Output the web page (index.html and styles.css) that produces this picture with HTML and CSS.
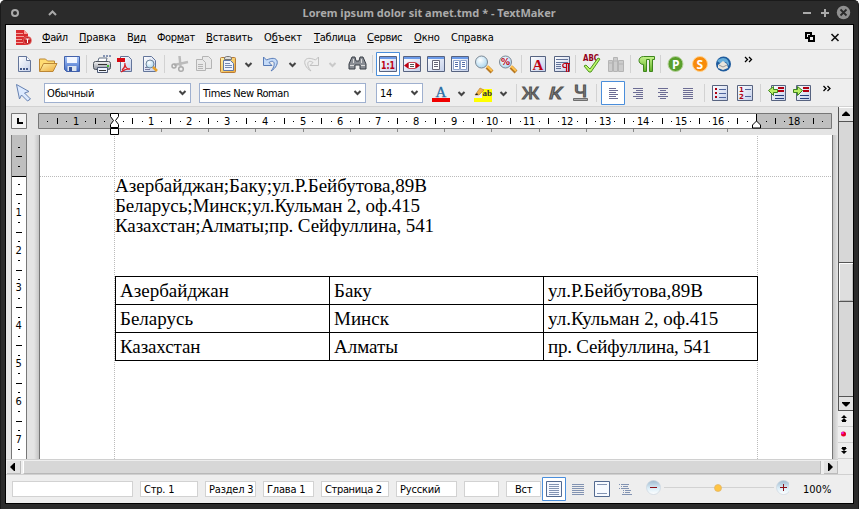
FILE: index.html
```
<!DOCTYPE html>
<html lang="ru">
<head>
<meta charset="utf-8">
<title>TextMaker</title>
<link rel="stylesheet" href="styles.css">
</head>
<body>
<svg class="defs" width="0" height="0">
  <defs>
    <linearGradient id="paper" x1="0" y1="0" x2="1" y2="1"><stop offset="0" stop-color="#fff"/><stop offset="1" stop-color="#c3cfea"/></linearGradient>
    <linearGradient id="blue" x1="0" y1="0" x2="0" y2="1"><stop offset="0" stop-color="#a9c8fa"/><stop offset="1" stop-color="#3e68c4"/></linearGradient>
    <linearGradient id="gold" x1="0" y1="0" x2="1" y2="1"><stop offset="0" stop-color="#fff3a8"/><stop offset="1" stop-color="#eda93a"/></linearGradient>
    <linearGradient id="steel" x1="0" y1="0" x2="0" y2="1"><stop offset="0" stop-color="#f5f5f5"/><stop offset="1" stop-color="#8d929c"/></linearGradient>
    <linearGradient id="green" x1="0" y1="0" x2="0" y2="1"><stop offset="0" stop-color="#c5f48b"/><stop offset="1" stop-color="#5fae24"/></linearGradient>
    <radialGradient id="glass" cx=".4" cy=".35" r=".7"><stop offset="0" stop-color="#fff"/><stop offset="1" stop-color="#a6d4ef"/></radialGradient>
    <linearGradient id="knob" x1="0" y1="0" x2="0" y2="1"><stop offset="0" stop-color="#9db8cd"/><stop offset=".55" stop-color="#dceef8"/><stop offset="1" stop-color="#fff"/></linearGradient>
  </defs>
</svg>
<div class="window">
  <header class="titlebar">
    <svg class="title-left" width="80" height="24" viewBox="0 0 80 24"><circle cx="15" cy="13" r="3" fill="none" stroke="#aaa" stroke-width="2"/><path d="M49 15l3.500-3.500L56 15" fill="none" stroke="#aaa" stroke-width="2"/></svg>
    <h1 class="title">Lorem ipsum dolor sit amet.tmd * - TextMaker</h1>
    <svg class="title-right" width="80" height="24" viewBox="779 0 80 24"><path d="M803 13h8M821 13h8M825 9v8" stroke="#aaa" stroke-width="2"/><circle cx="843.500" cy="12.500" r="6.700" fill="#909090"/><path d="M840.500 9.500l6 6m0-6l-6 6" stroke="#2b2b2b" stroke-width="1.800"/></svg>
  </header>
  <div class="client">
    <nav class="menubar">
      <svg width="36" height="24" viewBox="6 25 36 24"><path d="M16 30h8l4 4v11H16z" fill="#d82c30"/><path d="M16 33.500h7M16 36.500h8M16 39.500h6M16 42.500h7" stroke="#f4a09b"/><path d="M24 30v4h4" fill="#f9a29c"/><circle cx="27.500" cy="40.500" r="4" fill="#c42125" stroke="#f28b85" stroke-width=".6"/><path d="M25.500 39h4M27.500 39v4" stroke="#fff"/></svg>
      <span class="menu m1"><u>Ф</u>айл</span><span class="menu m2"><u>П</u>равка</span><span class="menu m3">В<u>и</u>д</span><span class="menu m4">Фор<u>м</u>ат</span><span class="menu m5"><u>В</u>ставить</span><span class="menu m6">О<u>б</u>ъект</span><span class="menu m7"><u>Т</u>аблица</span><span class="menu m8"><u>С</u>ервис</span><span class="menu m9"><u>О</u>кно</span><span class="menu m10">Сп<u>р</u>авка</span>
      <svg class="push" width="54" height="24" viewBox="799 25 54 24"><path d="M806 33h5v5h-5z" fill="#eee" stroke="#000" stroke-width="2"/><path d="M809 36h5v5h-5z" fill="#eee" stroke="#000" stroke-width="2"/><path d="M831.500 34l7 7m0-7l-7 7" stroke="#111" stroke-width="1.600"/></svg>
    </nav>

    <div class="toolbar standard">
      <svg width="30" height="28" viewBox="6 50 30 28"><path d="M18.500 56.500h8l4 4v11h-12z" fill="url(#paper)" stroke="#63759a"/><path d="M26.500 56.500v4h4" fill="#fff" stroke="#63759a"/><path d="M20 69h2m1 0h2m1 0h2" stroke="#43598b" stroke-width="2"/></svg>
      <svg width="26" height="28" viewBox="36 50 26 28"><path d="M39.500 71V59h6l2 2h7v3" fill="#ffdc72" stroke="#bc8735"/><path d="M39.500 71.500l4-8h13.500l-4 8z" fill="url(#gold)" stroke="#bc8735"/></svg>
      <svg width="22" height="28" viewBox="62 50 22 28"><path d="M64.500 56.500h15v15h-13l-2-2z" fill="url(#blue)" stroke="#4261aa"/><path d="M67 57h10v6H67z" fill="#f2f6ff"/><path d="M67.500 66h9v5h-9z" fill="#dce4ef"/><path d="M69 67h3v4h-3z" fill="#34539a"/></svg>
      <i class="sep"></i>
      <svg width="27" height="28" viewBox="88 50 27 28"><path d="M98 61l1-3h8l-1 4" fill="#fff" stroke="#657287"/><rect x="93.500" y="61.500" width="17" height="8" rx="2" fill="url(#steel)" stroke="#4b525b"/><path d="M97.500 67.500h10v5h-10z" fill="#eef4ff" stroke="#4c5872"/><path d="M98 64.500h9M99 70.500h7" stroke="#333"/><path d="M103 56h2m1 0h2m1 0h2" stroke="#6478a1" stroke-width="1.500"/><path d="M107 66h2" stroke="#44bb35" stroke-width="2"/></svg>
      <svg width="24" height="28" viewBox="115 50 24 28"><path d="M120.500 56.500h8l3 3v12h-11z" fill="url(#paper)" stroke="#63759a"/><path d="M117 58h8v4h-8z" fill="#d60812"/><path d="M122 70c5-4 2-9 3-5 1 4 3 4 5 4-3-1-6 1-9 3" fill="none" stroke="#d92129" stroke-width="1.300"/></svg>
      <svg width="24" height="28" viewBox="139 50 24 28"><path d="M143.500 56.500h8l4 4v11h-12z" fill="url(#paper)" stroke="#63759a"/><path d="M145 67.500h4m-4 2h5" stroke="#777ba0"/><circle cx="150" cy="64" r="4" fill="url(#glass)" stroke="#71869b"/><path d="M153 67l4 4" stroke="#e8a22b" stroke-width="2.500"/></svg>
      <i class="sep sep-shift"></i>
      <svg width="25" height="28" viewBox="167 50 25 28"><path d="M179.500 56l1 10M188 62l-14 3" stroke="#bbb" stroke-width="2.500"/><circle cx="174" cy="66" r="2" fill="none" stroke="#aaa" stroke-width="1.500"/><circle cx="181" cy="69" r="2.300" fill="none" stroke="#aaa" stroke-width="1.500"/></svg>
      <svg width="24" height="28" viewBox="192 50 24 28" fill="#e9e9e9" stroke="#b4b4b4"><path d="M202.500 56.500h6l3 3v9h-9z"/><path d="M196.500 59.500h6l3 3v8h-9z"/><path d="M198 64.500h5m-5 2h5m-5 2h5"/></svg>
      <svg width="24" height="28" viewBox="216 50 24 28"><rect x="220.500" y="57.500" width="15" height="15" rx="1" fill="url(#gold)" stroke="#b77b38"/><path d="M224.500 59.500v-2l2-1h3l2 1v2z" fill="#ddd" stroke="#777"/><path d="M223.500 60.500h7l3 3v7h-10z" fill="#eff4ff" stroke="#6077a4"/><path d="M225 63.500h5m-5 2h7m-7 2h7" stroke="#778bb1"/></svg>
      <svg width="18" height="28" viewBox="240 50 18 28"><path d="M245.500 63l3 3 3-3" class="chev"/></svg>
      <svg width="26" height="28" viewBox="258 50 26 28"><path d="M263.500 57v8.500h8.500l-3-3c6-4 7 3 2 8.500 9-5 9-17-4.500-11z" fill="#c5dbf8" stroke="#587bb7"/></svg>
      <svg width="16" height="28" viewBox="284 50 16 28"><path d="M289.500 63l3 3 3-3" class="chev"/></svg>
      <svg width="26" height="28" viewBox="300 50 26 28"><path d="M318.500 57v8.500h-8.500l3-3c-6-4-7 3-2 8.500-9-5-9-17 4.500-11z" fill="#eee" stroke="#c1c1c1"/></svg>
      <svg width="18" height="28" viewBox="326 50 18 28"><path d="M329.500 63l3 3 3-3" class="chev off"/></svg>
      <svg width="28" height="28" viewBox="344 50 28 28"><path d="M352 57h3l1 4h3l1-4h3l3 7v5h-6v-4h-5v4h-6v-5z" fill="#898d94" stroke="#393e46"/><path d="M350 65.500h4m7 0h4M353.500 59v4m8-4v4" stroke="#ddd"/></svg>
      <i class="sep sep-tight"></i>
      <svg width="26" height="28" viewBox="375 50 26 28"><path d="M376.500 52.500h23v23h-23z" fill="#fff" stroke="#4a8edb"/><path d="M379.500 56.500h17v15h-17z" fill="url(#paper)" stroke="#576380"/><path d="M380 58h16" stroke="#6c9be9" stroke-width="2"/><text x="381" y="69" class="ratio" textLength="14" lengthAdjust="spacingAndGlyphs">1:1</text></svg>
      <svg width="24" height="28" viewBox="401 50 24 28"><path d="M403.500 56.500h17v15h-17z" fill="url(#paper)" stroke="#576380"/><path d="M404 58h16" stroke="#6c9be9" stroke-width="2"/><path d="M404 65.500l4-3v6zM420 65.500l-4-3v6z" fill="#c00012"/><path d="M408.500 62.500h7v6h-7z" fill="#fff" stroke="#c54b57"/><path d="M410 64.500h4m-4 2h4" stroke="#555"/></svg>
      <svg width="24" height="28" viewBox="425 50 24 28"><path d="M427.500 56.500h17v15h-17z" fill="url(#paper)" stroke="#576380"/><path d="M428 58h16" stroke="#6c9be9" stroke-width="2"/><path d="M432.500 60.500h7v9h-7z" fill="#fff" stroke="#667"/><path d="M434 62.500h4m-4 2h4m-4 2h4" stroke="#667"/></svg>
      <svg width="24" height="28" viewBox="449 50 24 28"><path d="M451.500 56.500h17v15h-17z" fill="url(#paper)" stroke="#576380"/><path d="M452 58h16" stroke="#6c9be9" stroke-width="2"/><path d="M453.500 60.500h6v9h-6zm7 0h6v9h-6z" fill="#fff" stroke="#8fa4cc"/><path d="M455 62.500h3m-3 2h3m-3 2h3m4-4h3m-3 2h3m-3 2h3" stroke="#556ea8"/></svg>
      <svg width="24" height="28" viewBox="473 50 24 28"><path d="M487 67l5 5" stroke="#b77823" stroke-width="4"/><path d="M487 66l5 5" stroke="#ffc350" stroke-width="2"/><circle cx="481.500" cy="62" r="6" fill="url(#glass)" stroke="#7b8794"/></svg>
      <svg width="24" height="28" viewBox="497 50 24 28"><path d="M511 67l5 5" stroke="#b77823" stroke-width="4"/><path d="M511 66l5 5" stroke="#ffc350" stroke-width="2"/><circle cx="505.500" cy="62" r="6" fill="url(#glass)" stroke="#7b8794"/><text x="501" y="65" class="percent">%</text></svg>
      <i class="sep sep-tight"></i>
      <svg width="26" height="28" viewBox="524 50 26 28"><path d="M530.500 56.500h15v15h-15z" fill="url(#paper)" stroke="#566381" /><text x="532.500" y="70" class="char-a">A</text></svg>
      <svg width="25" height="28" viewBox="550 50 25 28"><path d="M554.500 56.500h15v15h-15z" fill="url(#paper)" stroke="#566381"/><path d="M556 59.500h12m-12 3h12m-12 2h5m-5 2h5m-5 2h5" stroke="#627399"/><path d="M570 63.500h-5c-3 0-3 4 0 4h1M566.500 63v9m2-9v9" fill="none" stroke="#c00012" stroke-width="1.200"/></svg>
      <i class="sep sep-tight"></i>
      <svg width="26" height="28" viewBox="578 50 26 28"><text x="583" y="61" class="abc" textLength="16" lengthAdjust="spacingAndGlyphs">ABC</text><path d="M584 66l2-1 4 4 8-11 2 1-9 13h-2z" fill="#bcf56b" stroke="#4d951f"/></svg>
      <svg width="26" height="28" viewBox="604 50 26 28"><path d="M608.500 60.500h4v11h-4zm5-3h4v14h-4zm5 3h5v11h-5zM609 63h3m2-2h3m2 3h4" fill="#ccc" stroke="#b4b4b4"/></svg>
      <i class="sep sep-tight"></i>
      <svg width="27" height="28" viewBox="633 50 27 28"><path d="M654.500 56.500v3h-2v12h-3v-12h-3v12h-3v-7c-6 0-6-8 0-8z" fill="url(#green)" stroke="#3f861d"/></svg>
      <i class="sep sep-tight"></i>
      <svg width="26" height="28" viewBox="663 50 26 28"><circle cx="675.500" cy="64" r="7.500" fill="#5a9f2b" stroke="#b8d39f"/><text x="672" y="68.500" class="round-letter">P</text></svg>
      <svg width="24" height="28" viewBox="689 50 24 28"><circle cx="700" cy="64" r="7.500" fill="#f88b0a" stroke="#ffd290"/><text x="696.500" y="68.500" class="round-letter">S</text></svg>
      <svg width="25" height="28" viewBox="713 50 25 28"><circle cx="723.500" cy="64" r="7.500" fill="#1e5b9d"/><path d="M717 61c6-6 13-2 12 5l-3-4-6 1z" fill="#65acd9"/><path d="M718 65l5-4 4 3 1 4-5 2-5-2z" fill="#e8e5dc"/><path d="M719 65l4 2 4-2" fill="none" stroke="#999"/></svg>
      <svg width="24" height="28" viewBox="738 50 24 28"><path class="more" d="M745 57l2.500 2.500-2.500 2.500m4-5l2.500 2.500-2.500 2.500"/></svg>
    </div>

    <div class="toolbar format">
      <svg width="38" height="27" viewBox="6 79 38 27"><path d="M16.500 84.500l12.500 7-4.500 1.500 6 6-3 2-6-6-2 4z" fill="#dceaff" stroke="#6580b0"/></svg>
      <div class="combo style"><span>Обычный</span><svg width="9" height="6" viewBox="0 0 9 6"><path class="chev" d="M1.500 1l3 3 3-3"/></svg></div>
      <div class="combo family"><span>Times New Roman</span><svg width="9" height="6" viewBox="0 0 9 6"><path class="chev" d="M1.500 1l3 3 3-3"/></svg></div>
      <div class="combo size"><span>14</span><svg width="9" height="6" viewBox="0 0 9 6"><path class="chev" d="M1.500 1l3 3 3-3"/></svg></div>
      <svg width="31" height="27" viewBox="423 79 31 27"><text x="435.500" y="97" class="color-a">A</text><path d="M432 98h18v4h-18z" fill="#f00000"/></svg>
      <svg width="17" height="27" viewBox="454 79 17 27"><path d="M458.500 92l3 3 3-3" class="chev"/></svg>
      <svg width="25" height="27" viewBox="471 79 25 27"><path d="M474 98h18v4h-18zm8-9h10v9h-10z" fill="#ff0"/><path d="M475 95l5-7 4 2-5 5z" fill="#f5b545" stroke="#b17a32" stroke-width=".6"/><path d="M475 95l2-2 1 2z" fill="#222"/><text x="482.500" y="96" class="ab">ab</text></svg>
      <svg width="18" height="27" viewBox="496 79 18 27"><path d="M500.500 92l3 3 3-3" class="chev"/></svg>
      <i class="sep"></i>
      <svg width="28" height="27" viewBox="518 79 28 27"><text x="522" y="99" class="face" textLength="17" lengthAdjust="spacingAndGlyphs">Ж</text></svg>
      <svg width="25" height="27" viewBox="546 79 25 27"><text x="549" y="99" class="face italic" textLength="13" lengthAdjust="spacingAndGlyphs">К</text></svg>
      <svg width="25" height="27" viewBox="571 79 25 27"><text x="574" y="97" class="face" textLength="13" lengthAdjust="spacingAndGlyphs">Ч</text><path d="M573.500 98.500h14v2h-14z" fill="#aaa" stroke="#555" stroke-width=".8"/></svg>
      <i class="sep sep-tight"></i>
      <svg width="29" height="27" viewBox="599 79 29 27"><path d="M601.500 81.500h23v23h-23z" fill="#fff" stroke="#4a8edb"/><path class="align" d="M609 88.500h7m-7 2h9m-9 2h7m-7 2h9m-9 2h7m-7 2h9"/></svg>
      <svg width="25" height="27" viewBox="628 79 25 27"><path class="align" d="M633 88.500h10m-7 2h7m-10 2h10m-7 2h7m-10 2h10m-7 2h7"/></svg>
      <svg width="25" height="27" viewBox="653 79 25 27"><path class="align" d="M658 88.500h10m-8 2h6m-8 2h10m-8 2h6m-8 2h10m-8 2h6"/></svg>
      <svg width="26" height="27" viewBox="678 79 26 27"><path class="align" d="M683 88.500h10m-10 2h10m-10 2h10m-10 2h10m-10 2h10m-10 2h10"/></svg>
      <i class="sep sep-tight"></i>
      <svg width="26" height="27" viewBox="707 79 26 27"><path d="M712.500 85.500h15v15h-15z" fill="url(#paper)" stroke="#576380"/><path d="M715 88h2v2h-2zm0 4h2v2h-2zm0 4h2v2h-2z" fill="#b00012"/><path d="M719 89.500h7m-7 4h7m-7 4h7" stroke="#4f659d"/></svg>
      <svg width="27" height="27" viewBox="733 79 27 27"><path d="M737.500 85.500h15v15h-15z" fill="url(#paper)" stroke="#576380"/><text x="739" y="92" class="list-number">1</text><text x="739" y="99" class="list-number">2</text><path d="M745 89.500h6m-6 7h6" stroke="#4f659d"/></svg>
      <i class="sep sep-tight"></i>
      <svg width="26" height="27" viewBox="763 79 26 27"><path d="M771.500 85.500h14v15h-14z" fill="url(#paper)" stroke="#576380"/><path d="M778 88h6m-6 3h6" stroke="#b00012" stroke-width="2"/><path d="M775 95.500h9m-9 3h9" stroke="#27407d"/><path d="M768.500 90.500l5-4v3h4v3h-4v3z" fill="#b9ef67" stroke="#3d851d"/></svg>
      <svg width="27" height="27" viewBox="789 79 27 27"><path d="M796.500 85.500h14v15h-14z" fill="url(#paper)" stroke="#576380"/><path d="M803 88h6m-6 3h6" stroke="#b00012" stroke-width="2"/><path d="M800 95.500h9m-9 3h9" stroke="#27407d"/><path d="M802.500 90.500l-5-4v3h-4v3h4v3z" fill="#b9ef67" stroke="#3d851d"/></svg>
      <svg width="24" height="27" viewBox="816 79 24 27"><path class="more" d="M823.500 86l2.500 2.500-2.500 2.500m4-5l2.500 2.500-2.500 2.500"/></svg>
    </div>

    <main class="workspace">
      <div class="editor">
        <svg id="hruler" width="832" height="28" viewBox="6 107 832 28">
          <path d="M11.500 113.500h15v15h-15z" fill="#f2f2f2" stroke="#777"/><path d="M17 118h2v4h4v2h-6z"/>
          <path d="M38.500 113.500h793v15h-793z" fill="#fff" stroke="#777"/><path d="M39 114h75v14H39zM757 114h74v14h-74z" fill="#bfbfbf"/>
        </svg>
        <div class="page-row">
          <svg id="vruler" width="28" height="324" viewBox="6 135 28 324"><path d="M12 134h14v326H12z" fill="#fff"/><path d="M12 134h14v42H12z" fill="#bfbfbf"/><path d="M11.500 134v326m15 0V134" stroke="#777"/><path d="M12 176.500h14" stroke="#000"/></svg>
          <article class="page">
            <div class="body">
              <p>Азербайджан;Баку;ул.Р.Бейбутова,89В</p>
              <p class="snug">Беларусь;Минск;ул.Кульман 2, оф.415</p>
              <p class="snug">Казахстан;Алматы;пр. Сейфуллина, 541</p>
              <table>
                <tr><td>Азербайджан</td><td>Баку</td><td>ул.Р.Бейбутова,89В</td></tr>
                <tr><td>Беларусь</td><td>Минск</td><td>ул.Кульман 2, оф.415</td></tr>
                <tr><td class="snug">Казахстан</td><td>Алматы</td><td class="snugger">пр. Сейфуллина, 541</td></tr>
              </table>
            </div>
          </article>
          <div class="page-shade"></div>
        </div>
        <div class="hscroll"><button class="arrow"><svg width="14" height="13" viewBox="0 0 14 13"><path d="M8 2v8h-1L3 6l4-4z"/></svg></button><div class="hthumb"></div><button class="arrow"><svg width="14" height="13" viewBox="0 0 14 13"><path d="M4 2v8h1l4-4-4-4z"/></svg></button></div>
      </div>
      <aside class="vscroll">
        <button class="vbtn up"><svg width="14" height="13" viewBox="0 0 14 13"><path d="M3 8h8V7L7.500 3.500h-1L3 7z"/></svg></button>
        <div class="track"><div class="vthumb"></div></div>
        <button class="vbtn down"><svg width="14" height="13" viewBox="0 0 14 13"><path d="M3 5h8v1L7.500 9.500h-1L3 6z"/></svg></button>
        <div class="jump"><svg width="14" height="15" viewBox="0 0 14 15"><path d="M3 7h6L6 4zm0 3h6L6 7zM4 10h4v1H4z"/></svg></div>
        <div class="jump"><svg width="14" height="15" viewBox="0 0 14 15"><circle cx="5.500" cy="7" r="2.500" fill="#e90028"/><circle cx="4.500" cy="6" r="1.300" fill="#f020dc"/></svg></div>
        <div class="jump"><svg width="14" height="15" viewBox="0 0 14 15"><path d="M4 4h4v1H4zM3 5h6L6 8zm0 3h6l-3 3z"/></svg></div>
        <div class="jump last"></div>
      </aside>
    </main>

    <footer class="status">
      <span class="field f1"></span><span class="field f2">Стр. 1</span><span class="field f3">Раздел 3</span><span class="field f4">Глава 1</span><span class="field f5">Страница 2</span><span class="field f6">Русский</span><span class="field f7"></span><span class="field f8">Вст</span>
      <svg width="248" height="28" viewBox="541 475 248 28">
        <path d="M542.500 477.500h23v23h-23z" fill="#fff" stroke="#4a8edb"/><path d="M546.500 481.500h15v15h-15z" fill="#f5f8ff" stroke="#52698f"/><path d="M549 484.500h10m-10 2h10m-10 2h10m-10 2h10m-10 2h10m-10 2h10" stroke="#8293b2"/>
        <path d="M572 484.500h12m-12 2h12m-12 2h12m-12 2h12m-12 2h12m-12 2h12" stroke="#8293b2"/>
        <path d="M594.500 481.500h15v15h-15z" fill="#f7faff" stroke="#52698f"/><path d="M597 484.500h10m-10 9h10" stroke="#8293b2"/>
        <path d="M619 484.500h1m1 0h8M621 486.500h1m1 0h5M619 488.500h1m1 0h8M623 490.500h1m1 0h6M623 492.500h1m1 0h5M622 494.500h10" stroke="#8293b2"/>
        <path d="M664 487.500h110" stroke="#d2d2d2"/>
        <circle cx="653.500" cy="487.500" r="7" fill="url(#knob)" stroke="#ccd6df" stroke-width=".7"/><path d="M650 487.500h7" stroke="#8b1018"/>
        <circle cx="718" cy="488" r="3.500" fill="#ffc443" stroke="#dfb46b" stroke-width=".7"/>
        <circle cx="783.500" cy="487.500" r="7" fill="url(#knob)" stroke="#ccd6df" stroke-width=".7"/><path d="M780 487.500h7m-3.500-3.500v7" stroke="#8b1018"/>
      </svg>
      <span class="zoom">100%</span>
    </footer>
  </div>
</div>
<script src="rulers.js"></script>
</body>
</html>
```
FILE: styles.css
```
* { box-sizing: border-box; }
body { margin: 0; background: #fff; overflow: hidden; font: 11px/14px "DejaVu Sans Condensed", "DejaVu Sans", sans-serif; color: #000; }
svg { display: block; flex: none; }
.defs { position: absolute; }
.window { width: 859px; height: 509px; background: #2b2b2b; border: 1px solid #1a1a1a; border-bottom: 0; border-radius: 5px 5px 0 0; display: flex; flex-direction: column; }
.titlebar { margin: -1px -1px 1px; height: 24px; display: flex; justify-content: space-between; }
.title { margin: 0; padding-top: 1px; font: bold 11px/24px "Noto Sans", sans-serif; color: #aaa; width: 254px; white-space: nowrap; letter-spacing: 0; }
.client { margin: -1px 4px 0; width: 849px; height: 480px; border: 1px solid #000; background: #eee; display: flex; flex-direction: column; }
.menubar { height: 25px; display: flex; border-bottom: 1px solid #d2d2d2; line-height: 25px; letter-spacing: -.15px; }
.menu { white-space: nowrap; flex: none; }
.menu u { text-underline-offset: 1px; text-decoration-thickness: 1px; }
.m1 { width: 37px; letter-spacing: -.4px; } .m2 { width: 48px; } .m3 { width: 30px; letter-spacing: -.4px; } .m4 { width: 49px; letter-spacing: -.4px; } .m5 { width: 58px; }
.m6 { width: 50px; } .m7 { width: 53px; letter-spacing: -.3px; } .m8 { width: 47px; letter-spacing: -.3px; } .m9 { width: 37px; } .m10 { width: 45px; }
.push { margin-left: auto; }
.toolbar { display: flex; border-bottom: 1px solid #d2d2d2; }
.standard { height: 29px; }
.format { height: 28px; }
.sep { flex: none; width: 1px; height: 18px; margin: 5px 1px 0 2px; background: #d2d2d2; }
.sep-shift { margin-left: 1px; margin-right: 2px; }
.sep-tight { margin: 5px 2px 0 0; }
.chev { fill: none; stroke: #444; stroke-width: 2; }
.off { stroke: #c9c9c9; }
.more { fill: none; stroke: #000; stroke-width: 1.3; }
.align { stroke: #6c6c94; }
.combo { flex: none; height: 20px; margin-top: 4px; border: 1px solid #9fb0cf; background: #fff; display: flex; align-items: center; justify-content: space-between; padding: 2px 3px 0 2px; }
.combo svg { margin-top: -2px; }
.style { width: 147px; margin-right: 8px; letter-spacing: -.15px; }
.family { width: 167px; margin-right: 10px; padding-left: 3px; letter-spacing: -.38px; }
.size { width: 47px; letter-spacing: -.4px; padding-left: 3px; }
.ratio { font: bold 10px "DejaVu Sans"; fill: #bd0012; }
.percent { font: bold 9px "DejaVu Sans"; fill: #bd0012; }
.char-a { font: bold 15px "Liberation Serif"; fill: #bd0012; }
.abc { font: bold 8px "DejaVu Sans"; fill: #930018; }
.round-letter { font: bold 12px "Open Sans"; fill: #fff; }
.color-a { font: 15px "Liberation Serif"; fill: #286da4; stroke: #286da4; stroke-width: .3px; }
.ab { font: bold 9px "Liberation Serif"; fill: #333; }
.face { font: 17px "Liberation Sans"; fill: #999; stroke: #555; stroke-width: 1.1px; }
.italic { font-style: italic; }
.list-number { font: bold 7px "DejaVu Sans"; fill: #b00012; }
.workspace { height: 368px; display: flex; background: #e4e4e4; }
.editor { width: 832px; display: flex; flex-direction: column; }
.page-row { height: 324px; display: flex; background: linear-gradient(90deg, #e4e4e4 28px, #c4c4c4 33px, #e4e4e4 34px); }
.page-shade { width: 5px; background: linear-gradient(90deg, #c4c4c4, #e4e4e4); }
.ruler-text { font: 11px "DejaVu Sans Condensed"; text-anchor: middle; letter-spacing: -.3px; }
.page { width: 794px; margin-left: 5px; flex: none; height: 324px; border-left: 1px solid #777; border-right: 1px solid #777; background: #fff; padding: 0 0 0 74px; background-image: repeating-linear-gradient(90deg, #bbb 0 1px, transparent 1px 2px), repeating-linear-gradient(0deg, #bbb 0 1px, transparent 1px 2px), repeating-linear-gradient(0deg, #bbb 0 1px, transparent 1px 2px); background-size: 100% 1px, 1px 100%, 1px 100%; background-position: 0 41px, 74px 0, 717px 0; background-repeat: no-repeat; }
.body { padding: 41px 0 0 1px; font: 19px/20px "Liberation Serif", serif; }
.body p { margin: 0; white-space: nowrap; }
.body .snug { letter-spacing: -.11px; }
.body .snugger { letter-spacing: -.2px; }
table { margin-top: 40px; border-collapse: collapse; table-layout: fixed; width: 643px; background: #fff; }
td { border: 1px solid #000; height: 28px; padding: 0 4px 1px; white-space: nowrap; line-height: 19px; }
.hscroll { height: 16px; display: flex; background: #eee; border-top: 1px solid #d0d0d0; border-bottom: 1px solid #d0d0d0; padding: 1px 0 0 1px; }
button { border: 0; padding: 0; background: #e2e2e2; }
.arrow { width: 14px; height: 13px; flex: none; box-shadow: inset -1px -1px #bbb; }
.hthumb { width: 798px; margin: 0 3px 0 2px; background: #d7d7d7; border: solid #b8b8b8; border-width: 0 1px 1px 0; border-left: 1px solid #fff; }
.vscroll { width: 15px; background: #eee; border-left: 1px solid #555; display: flex; flex-direction: column; }
.vbtn { height: 15px; width: 14px; border-bottom: 1px solid #555; border-top: 1px solid #fff; flex: none; }
.track { height: 274px; padding-top: 140px; background: #d7d7d7; }
.vthumb { height: 40px; border: solid #555; border-width: 1px 0; background: #dedede; box-shadow: inset 1px 1px #fff, inset -1px -1px #bbb; }
.down { border-top: 1px solid #555; }
.jump { height: 16px; border-bottom: 1px solid #d0d0d0; margin-left: -1px; background: #eee; }
.last { flex: 1; }
.status { height: 28px; display: flex; flex: none; letter-spacing: -.2px; }
.field { flex: none; height: 16px; margin-top: 6px; background: #fff; border: 1px solid #d2d2d2; padding: 1px 0 0 3px; line-height: 14px; white-space: nowrap; overflow: hidden; }
.f1 { width: 121px; margin-left: 6px; } .f2 { width: 58px; margin-left: 7px; } .f3 { width: 51px; margin-left: 7px; }
.f4 { width: 51px; margin-left: 7px; } .f5 { width: 68px; margin-left: 7px; letter-spacing: -.35px; } .f6 { width: 61px; margin-left: 7px; }
.f7 { width: 35px; margin-left: 7px; } .f8 { width: 35px; margin-left: 7px; padding-left: 8px; }
.zoom { margin-left: 14px; line-height: 29px; letter-spacing: 0; }
```
FILE: rulers.js
```
const SVG_NS = "http://www.w3.org/2000/svg";
const CM = 37.8;

function add(parent, name, attrs, text) {
  const node = document.createElementNS(SVG_NS, name);
  for (const key in attrs) node.setAttribute(key, attrs[key]);
  if (text) node.textContent = text;
  parent.appendChild(node);
}

const h = document.getElementById("hruler");
for (let q = -7; q <= 75; q++) {
  const x = Math.round(113.5 + q * CM / 4);
  if (q === 0 || q === 68) continue;
  if (q % 4 === 0) add(h, "text", { x: x, y: 125, class: "ruler-text" }, String(Math.abs(q / 4)));
  else if (q % 2 === 0) add(h, "rect", { x: x, y: 118, width: 1, height: 6 });
  else add(h, "rect", { x: x, y: 121, width: 1, height: 1 });
}
for (let i = 0; i < 13; i++) {
  add(h, "rect", { x: Math.round(161 + i * 47.2), y: 129, width: 1, height: 3, fill: "#888" });
}
add(h, "path", { d: "M110.500 113.500h8v3l-3 4 3 4v3h-8v-3l3-4-3-4zM110.500 128.500h8v6h-8z", fill: "#fff", stroke: "#000" });
add(h, "path", { d: "M756.500 114v7l4 4v3h-8v-3l4-4", fill: "#fff", stroke: "#000" });

const v = document.getElementById("vruler");
for (let q = -3; q <= 29; q++) {
  const y = Math.round(175 + q * CM / 4);
  if (q === 0) continue;
  if (q % 4 === 0) add(v, "text", { x: 18.5, y: y + 3, class: "ruler-text" }, String(q / 4));
  else if (q % 2 === 0) add(v, "rect", { x: 16, y: y, width: 6, height: 1 });
  else add(v, "rect", { x: 18, y: y, width: 2, height: 1 });
}
```
